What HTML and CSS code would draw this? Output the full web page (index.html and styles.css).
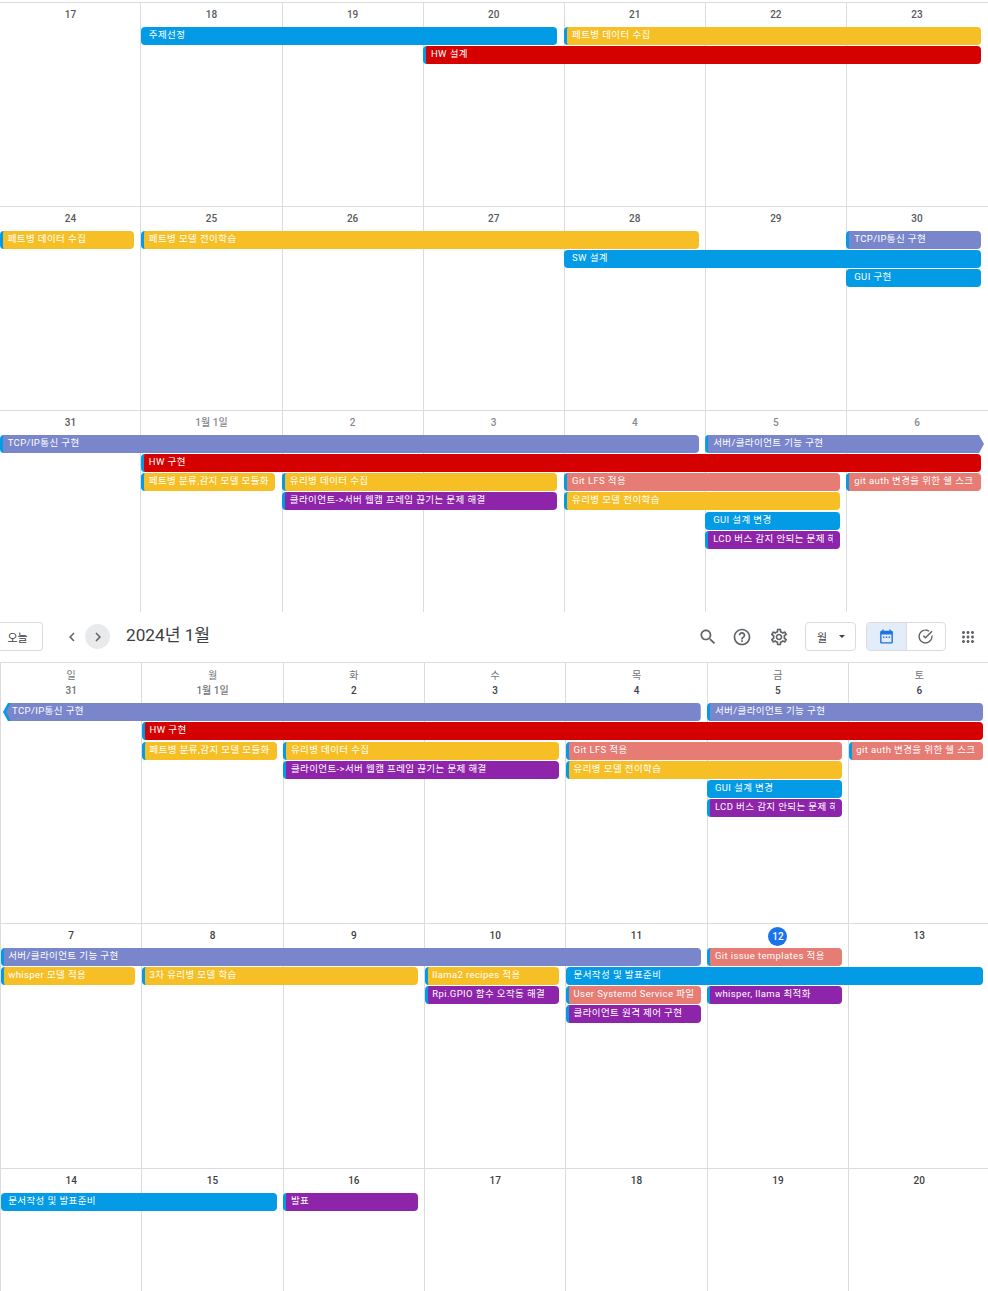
FILE: index.html
```html
<!DOCTYPE html>
<html lang="ko">
<head>
    <meta name="viewport" content="width=device-width, initial-scale=1.0">
    <link rel="stylesheet" href="styles.css">
    <title>Calendar</title>
</head>

<body>
    <div class="month month-top">
        <div class="week week-a">
            <div class="cell c1"><span class="date now">17</span></div>
            <div class="cell c2"><span class="date now">18</span></div>
            <div class="cell c3"><span class="date now">19</span></div>
            <div class="cell c4"><span class="date now">20</span></div>
            <div class="cell c5"><span class="date now">21</span></div>
            <div class="cell c6"><span class="date now">22</span></div>
            <div class="cell c7"><span class="date now">23</span></div>
            <div class="event blue c2 s3 r2">주제선정</div>
            <div class="event yellow bar c5 s3 r2">페트병 데이터 수집</div>
            <div class="event red bar c4 s4 r3">HW 설계</div>
        </div>
        <div class="week week-a">
            <div class="cell c1"><span class="date now">24</span></div>
            <div class="cell c2"><span class="date now">25</span></div>
            <div class="cell c3"><span class="date now">26</span></div>
            <div class="cell c4"><span class="date now">27</span></div>
            <div class="cell c5"><span class="date now">28</span></div>
            <div class="cell c6"><span class="date now">29</span></div>
            <div class="cell c7"><span class="date now">30</span></div>
            <div class="event yellow bar c1 s1 r2">페트병 데이터 수집</div>
            <div class="event yellow bar c2 s4 r2">페트병 모델 전이학습</div>
            <div class="event lavender bar c7 s1 r2">TCP/IP통신 구현</div>
            <div class="event blue c5 s3 r3">SW 설계</div>
            <div class="event blue c7 s1 r4">GUI 구현</div>
        </div>
        <div class="week week-b">
            <div class="cell c1"><span class="date now">31</span></div>
            <div class="cell c2"><span class="date">1월 1일</span></div>
            <div class="cell c3"><span class="date">2</span></div>
            <div class="cell c4"><span class="date">3</span></div>
            <div class="cell c5"><span class="date">4</span></div>
            <div class="cell c6"><span class="date">5</span></div>
            <div class="cell c7"><span class="date">6</span></div>
            <div class="event lavender bar c1 s5 r2">TCP/IP통신 구현</div>
            <div class="event lavender bar more-right c6 s2 r2">서버/클라이언트 기능 구현</div>
            <div class="event red bar c2 s6 r3">HW 구현</div>
            <div class="event yellow bar c2 s1 r4">페트병 분류,감지 모델 모듈화</div>
            <div class="event yellow bar c3 s2 r4">유리병 데이터 수집</div>
            <div class="event salmon bar c5 s2 r4">Git LFS 적용</div>
            <div class="event salmon bar c7 s1 r4"><span class="clip">git auth 변경을 위한 쉘 스크립트</span></div>
            <div class="event purple bar c3 s2 r5">클라이언트-&gt;서버 웹캠 프레임 끊기는 문제 해결</div>
            <div class="event yellow bar c5 s2 r5">유리병 모델 전이학습</div>
            <div class="event blue c6 s1 r6">GUI 설계 변경</div>
            <div class="event purple bar c6 s1 r7"><span class="clip">LCD 버스 감지 안되는 문제 해결</span></div>
        </div>
    </div>

    <header class="toolbar">
        <button class="btn today">오늘</button>
        <div class="nav">
            <span class="nav-btn">
                <svg viewBox="0 0 24 24"><path d="M15.41 7.41 14 6l-6 6 6 6 1.41-1.41L10.83 12z"/></svg>
            </span>
            <span class="nav-btn active">
                <svg viewBox="0 0 24 24"><path d="M8.59 16.59 10 18l6-6-6-6-1.41 1.41L13.17 12z"/></svg>
            </span>
        </div>
        <h1 class="title">2024년 1월</h1>
        <div class="tools">
            <svg class="icon" viewBox="0 0 24 24"><path d="M15.5 14h-.79l-.28-.27C15.41 12.59 16 11.11 16 9.5 16 5.91 13.09 3 9.5 3S3 5.91 3 9.5 5.91 16 9.5 16c1.61 0 3.09-.59 4.23-1.57l.27.28v.79l5 4.99L20.49 19l-4.99-5zm-6 0C7.01 14 5 11.99 5 9.5S7.01 5 9.5 5 14 7.01 14 9.5 11.99 14 9.5 14z"/></svg>
            <svg class="icon" viewBox="0 0 24 24"><path d="M11 18h2v-2h-2v2zm1-16C6.48 2 2 6.48 2 12s4.48 10 10 10 10-4.48 10-10S17.52 2 12 2zm0 18c-4.41 0-8-3.59-8-8s3.59-8 8-8 8 3.59 8 8-3.59 8-8 8zm0-14c-2.21 0-4 1.79-4 4h2c0-1.1.9-2 2-2s2 .9 2 2c0 2-3 1.75-3 5h2c0-2.25 3-2.5 3-5 0-2.21-1.79-4-4-4z"/></svg>
            <svg class="icon gear" viewBox="0 0 24 24"><path d="M19.43 12.98c.04-.32.07-.64.07-.98 0-.34-.03-.66-.07-.98l2.11-1.65c.19-.15.24-.42.12-.64l-2-3.46c-.09-.16-.26-.25-.44-.25-.06 0-.12.01-.17.03l-2.49 1c-.52-.4-1.08-.73-1.69-.98l-.38-2.65C14.46 2.18 14.25 2 14 2h-4c-.25 0-.46.18-.49.42l-.38 2.65c-.61.25-1.17.59-1.69.98l-2.49-1c-.06-.02-.12-.03-.18-.03-.17 0-.34.09-.43.25l-2 3.46c-.13.22-.07.49.12.64l2.11 1.65c-.04.32-.07.65-.07.98 0 .33.03.66.07.98l-2.11 1.65c-.19.15-.24.42-.12.64l2 3.46c.09.16.26.25.44.25.06 0 .12-.01.17-.03l2.49-1c.52.4 1.08.73 1.69.98l.38 2.65c.03.24.24.42.49.42h4c.25 0 .46-.18.49-.42l.38-2.65c.61-.25 1.17-.59 1.69-.98l2.49 1c.06.02.12.03.18.03.17 0 .34-.09.43-.25l2-3.46c.12-.22.07-.49-.12-.64l-2.11-1.65zm-1.98-1.71c.04.31.05.52.05.73 0 .21-.02.43-.05.73l-.14 1.13.89.7 1.08.84-.7 1.21-1.27-.51-1.04-.42-.9.68c-.43.32-.84.56-1.25.73l-1.06.43-.16 1.13-.2 1.35h-1.4l-.19-1.35-.16-1.13-1.06-.43c-.43-.18-.83-.41-1.23-.71l-.91-.7-1.06.43-1.27.51-.7-1.21 1.08-.84.89-.7-.14-1.13c-.03-.31-.05-.54-.05-.74s.02-.43.05-.73l.14-1.13-.89-.7-1.08-.84.7-1.21 1.27.51 1.04.42.9-.68c.43-.32.84-.56 1.25-.73l1.06-.43.16-1.13.2-1.35h1.39l.19 1.35.16 1.13 1.06.43c.43.18.83.41 1.23.71l.91.7 1.06-.43 1.27-.51.7 1.21-1.07.85-.89.7.14 1.13zM12 8c-2.21 0-4 1.79-4 4s1.79 4 4 4 4-1.79 4-4-1.79-4-4-4zm0 6c-1.1 0-2-.9-2-2s.9-2 2-2 2 .9 2 2-.9 2-2 2z"/></svg>
        </div>
        <button class="btn view">월<span class="caret"></span></button>
        <div class="toggle">
            <span class="toggle-item on">
                <svg viewBox="0 0 24 24"><path d="M19 4h-1V2h-2v2H8V2H6v2H5c-1.100 0-2 .9-2 2v14c0 1.100.9 2 2 2h14c1.100 0 2-.9 2-2V6c0-1.100-.9-2-2-2zm0 16H5V9h14v11zM7 12h2v2H7zm4 0h2v2h-2zm4 0h2v2h-2z"/></svg>
            </span>
            <span class="toggle-item">
                <svg viewBox="0 0 24 24"><path d="M22 5.200 11.900 15.300l-3.700-3.700 1.400-1.400 2.300 2.300 8.700-8.700L22 5.200zM12 20c-4.400 0-8-3.600-8-8s3.600-8 8-8c1.600 0 3 .5 4.300 1.300l1.400-1.400C16.100 2.700 14.100 2 12 2 6.500 2 2 6.500 2 12s4.500 10 10 10 10-4.500 10-10c0-.7-.1-1.300-.2-2l-1.700 1.700V12c-.1 4.400-3.700 8-8.100 8z"/></svg>
            </span>
        </div>
        <svg class="apps" viewBox="0 0 24 24"><path d="M6 8c1.100 0 2-.9 2-2s-.9-2-2-2-2 .9-2 2 .9 2 2 2zm6 12c1.100 0 2-.9 2-2s-.9-2-2-2-2 .9-2 2 .9 2 2 2zm-6 0c1.100 0 2-.9 2-2s-.9-2-2-2-2 .9-2 2 .9 2 2 2zm0-6c1.100 0 2-.9 2-2s-.9-2-2-2-2 .9-2 2 .9 2 2 2zm6 0c1.100 0 2-.9 2-2s-.9-2-2-2-2 .9-2 2 .9 2 2 2zm4-8c0 1.100.9 2 2 2s2-.9 2-2-.9-2-2-2-2 .9-2 2zm-4 2c1.100 0 2-.9 2-2s-.9-2-2-2-2 .9-2 2 .9 2 2 2zm6 6c1.100 0 2-.9 2-2s-.9-2-2-2-2 .9-2 2 .9 2 2 2zm0 6c1.100 0 2-.9 2-2s-.9-2-2-2-2 .9-2 2 .9 2 2 2z"/></svg>
    </header>

    <div class="month month-bottom">
        <div class="week week-c">
            <div class="cell c1"><span class="day">일</span><span class="date">31</span></div>
            <div class="cell c2"><span class="day">월</span><span class="date">1월 1일</span></div>
            <div class="cell c3"><span class="day">화</span><span class="date now">2</span></div>
            <div class="cell c4"><span class="day">수</span><span class="date now">3</span></div>
            <div class="cell c5"><span class="day">목</span><span class="date now">4</span></div>
            <div class="cell c6"><span class="day">금</span><span class="date now">5</span></div>
            <div class="cell c7"><span class="day">토</span><span class="date now">6</span></div>
            <div class="event lavender more-left c1 s5 r2">TCP/IP통신 구현</div>
            <div class="event lavender bar c6 s2 r2">서버/클라이언트 기능 구현</div>
            <div class="event red bar c2 s6 r3">HW 구현</div>
            <div class="event yellow bar c2 s1 r4">페트병 분류,감지 모델 모듈화</div>
            <div class="event yellow bar c3 s2 r4">유리병 데이터 수집</div>
            <div class="event salmon bar c5 s2 r4">Git LFS 적용</div>
            <div class="event salmon bar c7 s1 r4"><span class="clip">git auth 변경을 위한 쉘 스크립트</span></div>
            <div class="event purple bar c3 s2 r5">클라이언트-&gt;서버 웹캠 프레임 끊기는 문제 해결</div>
            <div class="event yellow bar c5 s2 r5">유리병 모델 전이학습</div>
            <div class="event blue c6 s1 r6">GUI 설계 변경</div>
            <div class="event purple bar c6 s1 r7"><span class="clip">LCD 버스 감지 안되는 문제 해결</span></div>
        </div>
        <div class="week week-d">
            <div class="cell c1"><span class="date now">7</span></div>
            <div class="cell c2"><span class="date now">8</span></div>
            <div class="cell c3"><span class="date now">9</span></div>
            <div class="cell c4"><span class="date now">10</span></div>
            <div class="cell c5"><span class="date now">11</span></div>
            <div class="cell c6"><span class="date today-mark">12</span></div>
            <div class="cell c7"><span class="date now">13</span></div>
            <div class="event lavender bar c1 s5 r2">서버/클라이언트 기능 구현</div>
            <div class="event salmon bar c6 s1 r2">Git issue templates 적용</div>
            <div class="event yellow bar c1 s1 r3">whisper 모델 적용</div>
            <div class="event yellow bar c2 s2 r3">3차 유리병 모델 학습</div>
            <div class="event yellow bar c4 s1 r3">llama2 recipes 적용</div>
            <div class="event blue c5 s3 r3">문서작성 및 발표준비</div>
            <div class="event purple bar c4 s1 r4">Rpi.GPIO 함수 오작동 해결</div>
            <div class="event salmon bar c5 s1 r4">User Systemd Service 파일</div>
            <div class="event purple bar c6 s1 r4">whisper, llama 최적화</div>
            <div class="event purple bar c5 s1 r5">클라이언트 원격 제어 구현</div>
        </div>
        <div class="week week-e">
            <div class="cell c1"><span class="date now">14</span></div>
            <div class="cell c2"><span class="date now">15</span></div>
            <div class="cell c3"><span class="date now">16</span></div>
            <div class="cell c4"><span class="date now">17</span></div>
            <div class="cell c5"><span class="date now">18</span></div>
            <div class="cell c6"><span class="date now">19</span></div>
            <div class="cell c7"><span class="date now">20</span></div>
            <div class="event blue c1 s2 r2">문서작성 및 발표준비</div>
            <div class="event purple bar c3 s1 r2">발표</div>
        </div>
    </div>
</body>

</html>
```
FILE: styles.css
```css
html,
body {
    margin: 0;
    padding: 0;
    height: 1291px;
    overflow: hidden;
    background-color: white;
}

body {
    font-family: Roboto, "Noto Sans CJK KR", sans-serif;
    color: #3c4043;
}

.month-top {
    margin-top: 2px;
    margin-left: -0.65px;
}

.month-top .week {
    grid-template-columns: repeat(7, 141.1px);
}

.month-bottom .week {
    grid-template-columns: repeat(7, 141.35px);
}

.week {
    display: grid;
    border-top: 1px solid #dadce0;
    box-sizing: border-box;
    overflow: hidden;
}

.week-a {
    height: 204px;
    grid-template-rows: 24px repeat(7, 19.15px) 1fr;
}

.week-b {
    height: 202px;
    grid-template-rows: 24px repeat(7, 19.15px) 1fr;
}

.week-c {
    height: 261px;
    grid-template-rows: 40px repeat(7, 19.3px) 1fr;
}

.week-d {
    height: 245px;
    grid-template-rows: 24px repeat(7, 19.15px) 1fr;
}

.week-e {
    height: 123px;
    grid-template-rows: 24px repeat(3, 19.15px) 1fr;
}

.cell {
    border-left: 1px solid #dadce0;
    display: flex;
    flex-direction: column;
    align-items: center;
    padding-top: 5px;
}

.day {
    font-size: 10px;
    line-height: 12px;
    margin-top: 2px;
    margin-bottom: 2px;
    color: #70757a;
}

.date {
    font-size: 10px;
    line-height: 14px;
    font-weight: 500;
    color: #70757a;
}

.date.now {
    color: #3c4043;
}

.month-top .date {
    color: #85888c;
}

.month-top .date.now {
    color: #55595d;
}

.date.today-mark {
    width: 19px;
    height: 19px;
    line-height: 19px;
    margin-top: -2px;
    border-radius: 50%;
    text-align: center;
    color: white;
    background-color: #1a73e8;
}

.c1 { grid-column-start: 1; }
.c2 { grid-column-start: 2; }
.c3 { grid-column-start: 3; }
.c4 { grid-column-start: 4; }
.c5 { grid-column-start: 5; }
.c6 { grid-column-start: 6; }
.c7 { grid-column-start: 7; }

.s1 { grid-column-end: span 1; }
.s2 { grid-column-end: span 2; }
.s3 { grid-column-end: span 3; }
.s4 { grid-column-end: span 4; }
.s5 { grid-column-end: span 5; }
.s6 { grid-column-end: span 6; }

.r2 { grid-row-start: 2; }
.r3 { grid-row-start: 3; }
.r4 { grid-row-start: 4; }
.r5 { grid-row-start: 5; }
.r6 { grid-row-start: 6; }
.r7 { grid-row-start: 7; }

/* day cells share the grid with the events, so they stay first */
.cell.c1,
.cell.c2,
.cell.c3,
.cell.c4,
.cell.c5,
.cell.c6,
.cell.c7 {
    grid-row: 1 / -1;
}

.event {
    position: relative;
    height: 18px;
    min-width: 0;
    margin: 0 6px 0 0.7px;
    padding-left: 7.5px;
    box-sizing: border-box;
    border-radius: 4px;
    font-size: 9.5px;
    line-height: 15px;
    letter-spacing: 0.4px;
    color: white;
    white-space: nowrap;
    overflow: hidden;
}

.month-top .event {
    margin-left: 0.3px;
    margin-right: 6.3px;
    padding-left: 8px;
}

.clip {
    display: block;
    margin-right: 7px;
    overflow: hidden;
}

.event.bar {
    border-left: 3px solid #039be5;
    padding-left: 4.5px;
}

.month-top .event.bar {
    padding-left: 5px;
}

.blue { background-color: #039be5; }
.yellow { background-color: #f6bf26; }
.red { background-color: #d50000; }
.salmon { background-color: #e67c73; }
.purple { background-color: #8e24aa; }
.lavender { background-color: #7986cb; }

/* event continues into the next or previous month */
.month-top .more-right {
    margin-right: 3px;
    border-radius: 4px 0 0 4px;
    clip-path: polygon(0 0, calc(100% - 5px) 0, 100% 50%, calc(100% - 5px) 100%, 0 100%);
}

.event.more-left {
    margin-left: 3px;
    padding-left: 9px;
    border-radius: 0 4px 4px 0;
    clip-path: polygon(5px 0, 100% 0, 100% 100%, 5px 100%, 0 50%);
}

.more-left::before {
    content: "";
    position: absolute;
    top: 0;
    left: 0;
    width: 8px;
    height: 100%;
    background-color: #039be5;
    clip-path: polygon(5px 0, 8px 0, 3px 50%, 8px 100%, 5px 100%, 0 50%);
}

.toolbar {
    display: flex;
    align-items: center;
    height: 50px;
    padding-bottom: 1px;
    box-sizing: border-box;
}

.btn {
    display: flex;
    align-items: center;
    justify-content: center;
    height: 29px;
    box-sizing: border-box;
    border: 1px solid #dadce0;
    border-radius: 4px;
    background-color: white;
    font-family: inherit;
    font-size: 11px;
    color: #3c4043;
    padding: 0;
}

.today {
    width: 44px;
    margin-left: -1px;
    padding-right: 6px;
    border-left: 0;
    border-radius: 0 4px 4px 0;
}

.nav {
    display: flex;
    gap: 1px;
    margin-left: 16px;
}

.nav-btn {
    display: flex;
    align-items: center;
    justify-content: center;
    width: 25px;
    height: 25px;
    border-radius: 50%;
}

.nav-btn svg {
    width: 18px;
    height: 18px;
    fill: #5f6368;
}

.nav-btn.active {
    background-color: #e9eaeb;
}

.title {
    margin: 0 0 7px 16px;
    font-size: 17.2px;
    font-weight: 400;
    color: #3c4043;
}

.tools {
    display: flex;
    gap: 14px;
    margin-left: auto;
}

.icon {
    width: 20px;
    height: 20px;
    fill: #5f6368;
}

.gear {
    margin-left: 3px;
}

.view {
    position: relative;
    width: 51px;
    margin-left: 16px;
    padding-right: 17px;
}

.caret {
    position: absolute;
    right: 10px;
    top: 12px;
    border-left: 3.5px solid transparent;
    border-right: 3.5px solid transparent;
    border-top: 3.5px solid #3c4043;
}

.toggle {
    display: flex;
    width: 80px;
    height: 29px;
    box-sizing: border-box;
    margin-left: 10px;
    border: 1px solid #dadce0;
    border-radius: 4px;
    overflow: hidden;
}

.toggle-item {
    flex: 1;
    display: flex;
    align-items: center;
    justify-content: center;
}

.toggle-item svg {
    width: 17px;
    height: 17px;
    fill: #5f6368;
}

.toggle-item.on {
    background-color: #e3edfa;
    border-right: 1px solid #dadce0;
}

.toggle-item.on svg {
    fill: #1a73e8;
}

.apps {
    width: 18px;
    height: 18px;
    margin: 0 11px 0 13px;
    fill: #5f6368;
}
```
